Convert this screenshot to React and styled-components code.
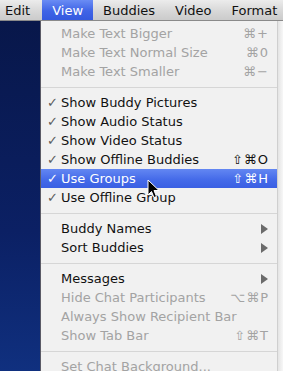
import React from "react";
import styled, { createGlobalStyle } from "styled-components";

const GlobalStyle = createGlobalStyle`
  html, body {
    margin: 0;
    padding: 0;
    width: 283px;
    height: 371px;
    overflow: hidden;
    background: #f3f3f3;
  }
  body {
    font-family: "DejaVu Sans", "Liberation Sans", sans-serif;
  }
`;

const Screen = styled.div`
  width: 283px;
  height: 371px;
  display: flex;
  flex-direction: column;
  position: relative;
  overflow: hidden;
`;

const MenuBar = styled.div`
  height: 21px;
  display: flex;
  align-items: stretch;
  background: linear-gradient(#ececec, #d6d6d6 60%, #cbcbcb);
  border-bottom: 1px solid #8a8a8a;
  box-sizing: border-box;
  flex-shrink: 0;
`;

const BarItem = styled.div`
  display: flex;
  align-items: center;
  padding: ${(p) => (p.$first ? "0 12px 0 5px" : "0 10px")};
  font-size: 13px;
  color: ${(p) => (p.$open ? "#fff" : "#111")};
  background: ${(p) =>
    p.$open ? "linear-gradient(#6a8cf4, #3f64e6 55%, #3459df)" : "none"};
  white-space: nowrap;
`;

const Body = styled.div`
  flex: 1;
  display: flex;
  min-height: 0;
`;

const Desktop = styled.div`
  width: 40px;
  flex-shrink: 0;
  background: linear-gradient(#08174a, #0b2064 60%, #10307f);
`;

const Menu = styled.div`
  width: 238px;
  flex-shrink: 0;
  background: #f1f1f1;
  border-left: 1px solid #5a5a66;
  border-right: 1px solid #cfcfcf;
  box-sizing: border-box;
  padding-top: 3px;
  display: flex;
  flex-direction: column;
`;

const BackWindow = styled.div`
  flex: 1;
  background: linear-gradient(90deg, #e4e4e4, #f7f7f7);
`;

const Row = styled.div`
  height: 19px;
  flex-shrink: 0;
  display: grid;
  grid-template-columns: 20px 1fr auto;
  align-items: center;
  padding-right: 8px;
  font-size: 13px;
  color: ${(p) => (p.$active ? "#fff" : p.$disabled ? "#a3a3a3" : "#111")};
  background: ${(p) =>
    p.$active ? "linear-gradient(#6387f2, #456be9 55%, #3a5fe3)" : "none"};
  white-space: nowrap;
`;

const Check = styled.span`
  justify-self: end;
  padding-right: 3px;
  font-size: 13px;
  color: ${(p) => (p.$active ? "#fff" : "#5c5c5c")};
`;

const Label = styled.span`
  padding-left: 0;
`;

const Shortcut = styled.span`
  letter-spacing: 1px;
  font-size: 13px;
  color: inherit;
`;

const Arrow = styled.span`
  width: 0;
  height: 0;
  margin-right: 1px;
  border-top: 5px solid transparent;
  border-bottom: 5px solid transparent;
  border-left: 7px solid #6b6b6b;
`;

const Separator = styled.div`
  height: 12px;
  flex-shrink: 0;
  display: flex;
  align-items: center;
  &::after {
    content: "";
    flex: 1;
    height: 1px;
    background: #d6d6d6;
  }
`;

const Cursor = styled.svg`
  position: absolute;
  left: 147px;
  top: 179px;
`;

const items = [
  { label: "Make Text Bigger", key: "⌘+", disabled: true },
  { label: "Make Text Normal Size", key: "⌘0", disabled: true },
  { label: "Make Text Smaller", key: "⌘−", disabled: true },
  "sep",
  { label: "Show Buddy Pictures", check: true },
  { label: "Show Audio Status", check: true },
  { label: "Show Video Status", check: true },
  { label: "Show Offline Buddies", check: true, key: "⇧⌘O" },
  { label: "Use Groups", check: true, key: "⇧⌘H", active: true },
  { label: "Use Offline Group", check: true },
  "sep",
  { label: "Buddy Names", submenu: true },
  { label: "Sort Buddies", submenu: true },
  "sep",
  { label: "Messages", submenu: true },
  { label: "Hide Chat Participants", key: "⌥⌘P", disabled: true },
  { label: "Always Show Recipient Bar", disabled: true },
  { label: "Show Tab Bar", key: "⇧⌘T", disabled: true },
  "sep",
  { label: "Set Chat Background...", disabled: true },
];

const App = () => (
  <Screen>
    <GlobalStyle />
    <MenuBar>
      <BarItem $first>Edit</BarItem>
      <BarItem $open>View</BarItem>
      <BarItem>Buddies</BarItem>
      <BarItem>Video</BarItem>
      <BarItem>Format</BarItem>
    </MenuBar>
    <Body>
      <Desktop />
      <Menu>
        {items.map((it, i) =>
          it === "sep" ? (
            <Separator key={i} />
          ) : (
            <Row key={i} $disabled={it.disabled} $active={it.active}>
              <Check $active={it.active}>{it.check ? "✓" : ""}</Check>
              <Label>{it.label}</Label>
              {it.submenu ? <Arrow /> : <Shortcut>{it.key || ""}</Shortcut>}
            </Row>
          )
        )}
      </Menu>
      <BackWindow />
    </Body>
    <Cursor width="13" height="20" viewBox="0 0 13 20">
      <path
        d="M1 1 L1 16 L4.5 12.5 L7 18.5 L9.5 17.5 L7 11.5 L12 11.5 Z"
        fill="#000"
        stroke="#fff"
        strokeWidth="1"
        strokeLinejoin="round"
      />
    </Cursor>
  </Screen>
);

export default App;
